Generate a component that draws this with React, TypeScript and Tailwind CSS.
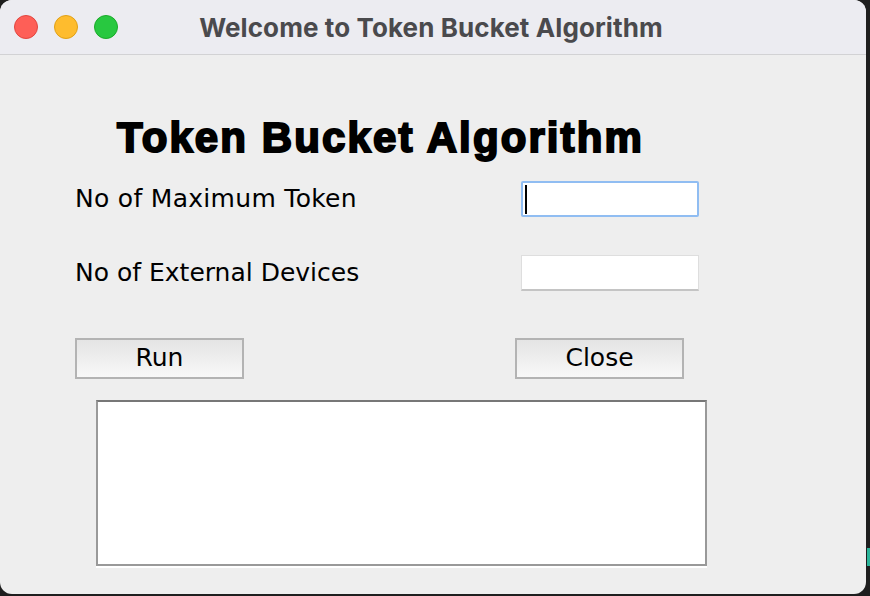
export default function App() {
  return (
    <div className="w-[870px] h-[596px] bg-[#1e1e1e] overflow-hidden relative">
      <div className="w-[866px] h-[594px] rounded-[12px] overflow-hidden flex flex-col bg-[#eeeeee]">
        {/* title bar */}
        <div className="h-[55px] shrink-0 flex items-center bg-[#ececf1] border-b border-[#d2d2d4] relative">
          <div className="flex items-center gap-[16px] pl-[14px]">
            <span className="w-[24px] h-[24px] rounded-full bg-[#fe5f57] border border-[#e2463f]" />
            <span className="w-[24px] h-[24px] rounded-full bg-[#febc2e] border border-[#e1a116]" />
            <span className="w-[24px] h-[24px] rounded-full bg-[#28c840] border border-[#1aab29]" />
          </div>
          <div className="absolute inset-0 flex items-center justify-center pr-[4px] pointer-events-none">
            <span className="text-[26px] font-bold text-[#4a4a4d] font-['Inter',sans-serif] tracking-[0.1px]">
              Welcome to Token Bucket Algorithm
            </span>
          </div>
        </div>

        {/* content */}
        <div className="flex flex-col font-['DejaVu_Sans',sans-serif] text-black">
          <h1 className="mt-[61px] pl-[117px] text-[42px] leading-[44px] font-bold tracking-[2.1px] font-['Liberation_Sans',sans-serif] [-webkit-text-stroke:2px_black]">
            Token Bucket Algorithm
          </h1>

          <div className="mt-[21px] flex items-center h-[36px]">
            <span className="pl-[75px] w-[521px] text-[25px] tracking-[0.3px]">No of Maximum Token</span>
            <div className="w-[178px] h-[36px] bg-white border-2 border-[#90bdf2] rounded-[2px] flex items-center pl-[2px]">
              <span className="w-[2px] h-[29px] bg-black" />
            </div>
          </div>

          <div className="mt-[38px] flex items-center h-[36px]">
            <span className="pl-[75px] w-[521px] text-[25px]">No of External Devices</span>
            <div className="w-[178px] h-[36px] bg-white border border-[#dedede] border-b-2 border-b-[#c4c4c4]" />
          </div>

          <div className="mt-[47px] flex items-center">
            <div className="ml-[75px] w-[169px] h-[41px] border-2 border-[#b3b3b3] bg-gradient-to-b from-[#e4e4e4] to-[#f8f8f8] flex items-center justify-center text-[25px] pb-[2px]">
              Run
            </div>
            <div className="ml-[271px] w-[169px] h-[41px] border-2 border-[#b3b3b3] bg-gradient-to-b from-[#e4e4e4] to-[#f8f8f8] flex items-center justify-center text-[25px] pb-[2px]">
              Close
            </div>
          </div>

          <div className="mt-[21px] ml-[96px] w-[611px] h-[166px] bg-white border-2 border-[#999999] border-t-[#777777] shadow-[0_2px_0_#ffffff]" />
        </div>
      </div>
      <div className="absolute left-[867px] top-[548px] w-[3px] h-[18px] bg-[#2bb59a]" />
    </div>
  );
}
